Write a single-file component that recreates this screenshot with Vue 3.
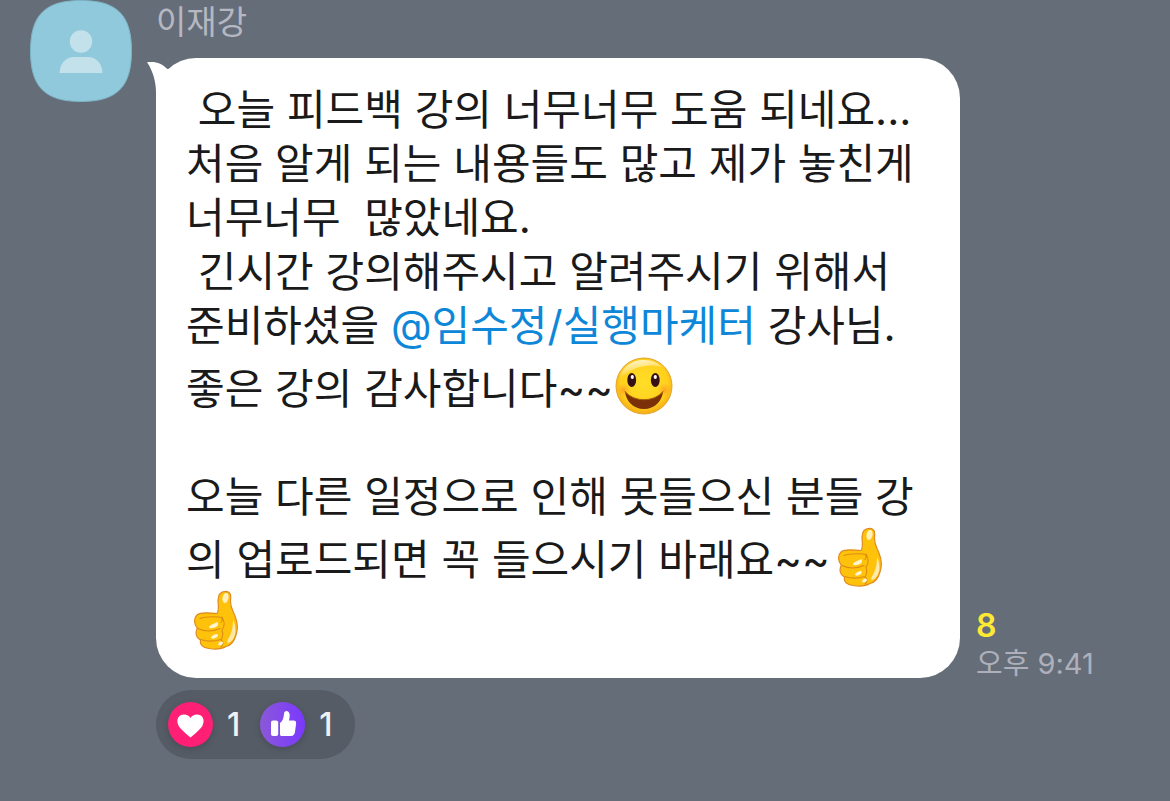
<script setup>
import { ref } from 'vue'

const sender = '이재강'
const unread = 8
const time = '오후 9:41'
const reactions = ref([
  { id: 'heart', label: '하트', count: 1 },
  { id: 'like', label: '좋아요', count: 1 }
])
const body = [
  { type: 'text', value: ' 오늘 피드백 강의 너무너무 도움 되네요... 처음 알게 되는 내용들도 많고 제가 놓친게 너무너무  많았네요.\n 긴시간 강의해주시고 알려주시기 위해서 준비하셨을 ' },
  { type: 'mention', value: '@임수정/실행마케터' },
  { type: 'text', value: ' 강사님.\n좋은 강의 감사합니다~~' },
  { type: 'smile' },
  { type: 'text', value: '\n\n오늘 다른 일정으로 인해 못들으신 분들 강의 업로드되면 꼭 들으시기 바래요~~' },
  { type: 'thumb' },
  { type: 'thumb' }
]
</script>

<template>
  <main class="chat">
    <article class="message">
      <svg class="avatar" viewBox="0 0 102 102" aria-hidden="true">
        <path d="M51 .5C87 .5 101.500 15 101.500 51S87 101.500 51 101.500.5 87 .5 51 15 .5 51 .5Z" fill="#90c9dc" stroke="#7db5c6" />
        <circle cx="51" cy="41.500" r="11.200" fill="#c2e1eb" />
        <path d="M29.500 73C30 63 36 57 44 57h14c8 0 14 6 14.500 16Z" fill="#c2e1eb" />
      </svg>
      <div class="content">
        <h2 class="sender">{{ sender }}</h2>
        <div class="row">
          <div class="bubble">
            <svg class="tail" viewBox="0 0 30 42" aria-hidden="true">
              <path d="M0 4.300C8 3 15 5 20.300 11L30 10V42H9V35C9 24 6 13 0 4.300Z" fill="#fff" />
            </svg>
            <p class="text"><template v-for="(part, i) in body" :key="i"><template v-if="part.type === 'text'">{{ part.value }}</template><a v-else-if="part.type === 'mention'" class="mention" href="#">{{ part.value }}</a><svg v-else-if="part.type === 'smile'" class="emoji" viewBox="0 0 60 63" role="img" aria-label="웃는 얼굴">
              <defs>
                <radialGradient id="face" cx=".5" cy=".45" r=".56">
                  <stop offset="0" stop-color="#ffde28" />
                  <stop offset=".75" stop-color="#ffd01c" />
                  <stop offset="1" stop-color="#f3a815" />
                </radialGradient>
                <linearGradient id="gloss" x1="0" y1="0" x2=".35" y2="1">
                  <stop offset="0" stop-color="#fff" stop-opacity=".95" />
                  <stop offset=".8" stop-color="#fff" stop-opacity="0" />
                </linearGradient>
                <radialGradient id="blush">
                  <stop offset="0" stop-color="#ff8426" stop-opacity=".6" />
                  <stop offset="1" stop-color="#ff9a2a" stop-opacity="0" />
                </radialGradient>
              </defs>
              <circle cx="31" cy="33" r="28" fill="url(#face)" stroke="#e5a52b" />
              <path d="M5.500 28C8 14 19 7 31 7c8 0 14 3 18 7C36 10 17 13 5.500 28Z" fill="url(#gloss)" />
              <circle cx="10.500" cy="37" r="7" fill="url(#blush)" />
              <circle cx="51.500" cy="37" r="7" fill="url(#blush)" />
              <ellipse cx="18.700" cy="27" rx="4.400" ry="6.900" fill="#351016" />
              <ellipse cx="42.300" cy="27" rx="4.400" ry="6.900" fill="#351016" />
              <ellipse cx="19.300" cy="24" rx="1.600" ry="2" fill="#fff" />
              <ellipse cx="42.300" cy="24" rx="1.600" ry="2" fill="#fff" />
              <path d="M12 38.500C21 49.500 41 49.500 50 38.500 49 48 42 56 31 56S13 48 12 38.500Z" fill="#7a3109" />
              <path d="M12 38.500C21 49.500 41 49.500 50 38.500" fill="none" stroke="#a85a0a" stroke-width="1" stroke-linecap="round" />
            </svg><svg v-else class="emoji" viewBox="0 0 60 63" role="img" aria-label="엄지 척">
              <path d="M31 26.500C33.500 23 32 17 32 13.500 32 10 33 4.500 39.700 4.300 45 4.500 45 9 44.500 13 44 20 46.500 23 49 29 52 36 52 42 50 48 48 55 45 58.500 40 59.500 36 62 29 62.500 23 61.500 17 61 13.500 58 14.500 53 10.500 50.500 9 46 11.300 41 8 37.500 7.500 31 11 28 14.500 24.500 25 26 31 26.500Z" fill="#ffc20b" stroke="#df8a20" stroke-width="1.200" stroke-linejoin="round" />
              <path d="M47 33c3.500 7 4 18-3.500 22.500-3 1-2.500-1.500-1-4C46 46 47 40 47 33Z" fill="#ffe9a8" />
              <path d="M14 31.500c5-2 13-2 19-1.500 4 .5 4 3 2 5.500M12 41.500c7 3.500 15 3 22 0M15 52.500c7 2.500 13 2 20 0M36 30c3 5 3 9 0 13 1 3 1 7-1 10 3 2 2 5 0 7" fill="none" stroke="#df8b13" stroke-width="1.100" stroke-linecap="round" />
              <ellipse cx="39.500" cy="11" rx="3" ry="5" fill="#fff0bd" transform="rotate(12 39.500 11)" />
              <path d="M23 40c2-3 5-3 8-5 2 1 1 4-1 5-2 1-7 2-7 0ZM25 50c2-2 4-3 6-3 2 1 0 4-2 4-1 1-4 1-4-1ZM32 57.500c1-3 4-4 5-2 0 3-4 4-5 2Z" fill="#fff5d2" />
            </svg></template></p>
          </div>
          <div class="meta">
            <span class="unread">{{ unread }}</span>
            <time class="time" datetime="21:41">{{ time }}</time>
          </div>
        </div>
        <div class="reactions">
          <button v-for="r in reactions" :key="r.id" class="reaction" type="button" :aria-label="r.label + ' ' + r.count">
            <span class="badge" :class="r.id">
              <svg v-if="r.id === 'heart'" viewBox="0 0 45 45" aria-hidden="true">
                <path d="M22.500 35.500C20 33.500 12 27 10.500 23.500 7.500 17 11 12.500 16 12.500c3 0 5.200 1.300 6.500 3.500 1.300-2.200 3.500-3.500 6.500-3.500 5 0 8.500 4.500 5.500 11C33 27 25 33.500 22.500 35.500Z" fill="#fff" />
              </svg>
              <svg v-else viewBox="0 0 45 45" aria-hidden="true">
                <rect x="11" y="18.500" width="7.200" height="15.500" rx="2" fill="#fff" />
                <path d="M20 21c3-2 3.500-5 4-9 .3-4.500 5.500-3.500 5.700 1 0 2.500-.4 4-.7 5.500h4.500c2 0 2.800 1.200 2.600 3L35 30c-.6 2.800-1.700 4-4 4h-9c-1.500 0-2-.5-2-2Z" fill="#fff" />
              </svg>
            </span>
            <span class="count">{{ r.count }}</span>
          </button>
        </div>
      </div>
    </article>
  </main>
</template>

<style>
html,
body {
  margin: 0;
  background: #656d78;
}
</style>

<style scoped>
.chat {
  min-height: 100vh;
  box-sizing: border-box;
  padding: 0 30px;
  background: #656d78;
  font-family: Inter, "Noto Sans CJK KR", sans-serif;
}
.message {
  display: flex;
  align-items: flex-start;
  gap: 24px;
}
.avatar {
  flex: none;
  width: 102px;
  height: 102px;
}
.content {
  flex: 1;
  min-width: 0;
}
.sender {
  margin: 0 0 14px;
  color: #b5b8c2;
  font-size: 33px;
  font-weight: 400;
  line-height: 44px;
}
.row {
  display: flex;
  align-items: flex-end;
  gap: 16px;
}
.bubble {
  position: relative;
  box-sizing: border-box;
  max-width: 804px;
  min-width: 0;
  padding: 25px 30px 28px;
  border-radius: 40px;
  background: #fff;
}
.tail {
  position: absolute;
  top: 0;
  left: -9px;
  width: 30px;
  height: 42px;
}
.text {
  margin: 0;
  color: #1a1a1a;
  font-size: 42px;
  line-height: 54px;
  white-space: pre-wrap;
}
.mention {
  color: #0f87d8;
  text-decoration: none;
}
.emoji {
  width: 60px;
  height: 63px;
  vertical-align: bottom;
}
.meta {
  display: flex;
  flex: none;
  flex-direction: column;
}
.unread {
  color: #fee935;
  font-size: 32px;
  font-weight: 600;
  line-height: 48px;
}
.time {
  color: #adb0bb;
  font-size: 29px;
  line-height: 28px;
}
.reactions {
  display: inline-flex;
  gap: 20px;
  margin-top: 12px;
  padding: 12px 22px 12px 12px;
  border-radius: 35px;
  background: #565c66;
}
.reaction {
  display: flex;
  align-items: center;
  gap: 14px;
  padding: 0;
  border: 0;
  background: none;
  color: #f0f1f3;
  font: inherit;
  cursor: pointer;
}
.badge {
  width: 45px;
  height: 45px;
  border-radius: 50%;
  box-shadow: 0 2px 6px rgba(0, 0, 0, 0.18);
}
.badge svg {
  display: block;
  width: 45px;
  height: 45px;
}
.heart {
  background: #ff2076;
}
.like {
  background: linear-gradient(90deg, #8b58d8, #7a38ff);
}
.count {
  font-size: 32px;
  font-weight: 500;
  line-height: 45px;
}
</style>
